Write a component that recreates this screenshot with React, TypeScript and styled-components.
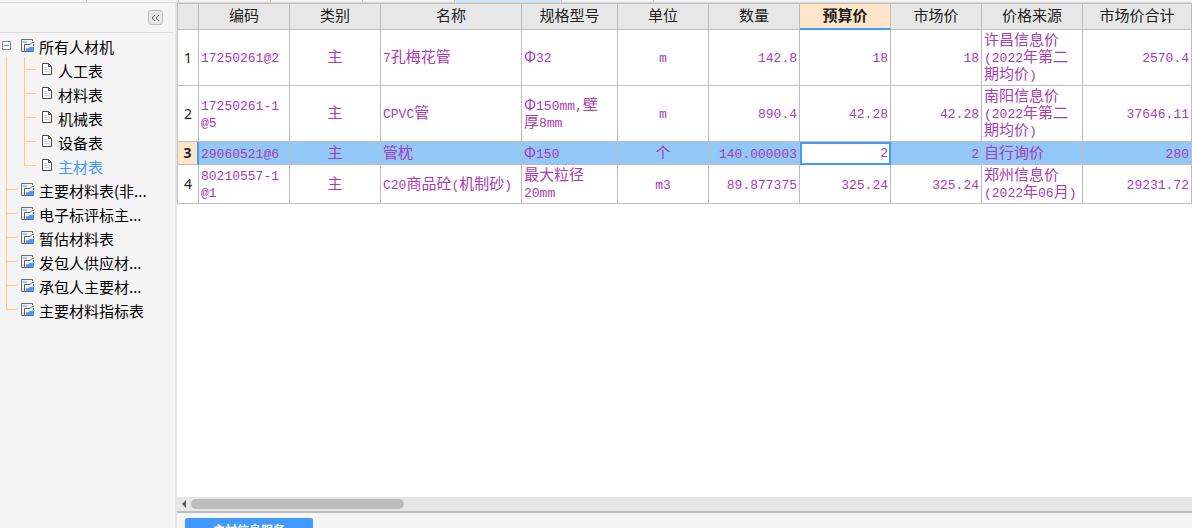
import React from "react";
import styled, { createGlobalStyle, css } from "styled-components";

const GlobalStyle = createGlobalStyle`
  * { box-sizing: border-box; }
  body {
    margin: 0;
    background: #f4f4f4;
    color: #000;
    font: 15px/17px "Noto Sans CJK SC", sans-serif;
  }
  button, input { font: inherit; color: inherit; }
`;

const Page = styled.div`
  display: flex;
  flex-direction: column;
  height: 100vh;
  overflow: hidden;
`;

const TabStrip = styled.nav`
  display: flex;
  flex: none;
  height: 3px;
  border-bottom: 1px solid #d8d8d8;
`;

const Tab = styled.span<{ $width: number; $active?: boolean }>`
  width: ${(p) => p.$width}px;
  border-right: 1px solid #c4c4c4;
  background: ${(p) => (p.$active ? "#cce6fc" : "#f4f4f4")};
`;

const Body = styled.div`
  display: flex;
  flex: 1;
  min-height: 0;
`;

const Sidebar = styled.aside`
  flex: none;
  width: 177px;
  border-right: 2px solid #e6e6e6;
`;

const SidebarHeader = styled.div`
  display: flex;
  justify-content: flex-end;
  align-items: center;
  height: 30px;
  margin-right: 2px;
  padding-right: 10px;
  border-bottom: 1px solid #dcdcdc;
`;

const CollapseButton = styled.button`
  display: flex;
  align-items: center;
  justify-content: center;
  width: 15px;
  height: 15px;
  padding: 0;
  border: 1px solid #bdbdbd;
  border-radius: 3px;
  background: #e6e6e6;
`;

const TreeRow = styled.div`
  display: flex;
  height: 24px;
`;

const railLine = "#ffcb80";

const Rail = styled.span<{ $kind: "branch" | "end" | "through" }>`
  flex: none;
  width: 12px;
  margin: 0 0 0 6px;
  background-repeat: no-repeat;
  background-image: linear-gradient(${railLine}, ${railLine}), linear-gradient(${railLine}, ${railLine});
  background-position: 0 0, 0 12px;
  background-size: ${(p) => {
    if (p.$kind === "through") return "1px 100%, 0 0";
    return p.$kind === "end" ? "1px 13px, 12px 1px" : "1px 100%, 12px 1px";
  }};
`;

const ExpandButton = styled.button`
  display: flex;
  flex: none;
  width: 18px;
  height: 24px;
  padding: 8px 0 0 2px;
  border: 0;
  background: none;
`;

const TreeLink = styled.a<{ $active?: boolean; $leaf?: boolean }>`
  display: flex;
  gap: ${(p) => (p.$leaf ? 5 : 4)}px;
  margin-left: ${(p) => (p.$leaf ? 6 : 3)}px;
  color: ${(p) => (p.$active ? "#4499ff" : "#000")};
  text-decoration: none;
  white-space: nowrap;

  svg { flex: none; margin-top: 6px; }
  span { padding-top: 5px; }
`;

const Main = styled.main`
  display: flex;
  flex: 1;
  flex-direction: column;
  min-width: 0;
`;

const GridArea = styled.div`
  flex: 1;
  min-height: 0;
  overflow: hidden;
  background: #fff;
`;

const Table = styled.table`
  width: 100%;
  table-layout: fixed;
  border-collapse: separate;
  border-spacing: 0;
  border-top: 1px solid #bdbdbd;
  border-left: 1px solid #bdbdbd;
`;

const HeadCell = styled.th<{ $active?: boolean }>`
  height: 26px;
  padding: 0 0 4px;
  border-right: 1px solid #bdbdbd;
  border-bottom: 1px solid #bdbdbd;
  background: #e7e7e7;
  color: #222;
  font-weight: 400;
  ${(p) =>
    p.$active &&
    css`
      border-bottom: 2px solid #4499ff;
      background: #ffe6c8;
      font-weight: 700;
    `}
`;

const RowNumber = styled.th<{ $active?: boolean }>`
  padding: 0 0 1px;
  border-right: ${(p) => (p.$active ? "2px solid #4499ff" : "1px solid #bdbdbd")};
  border-bottom: 1px solid #bdbdbd;
  background: ${(p) => (p.$active ? "#ffe6c8" : "#fff")};
  color: #222;
  font-family: "Noto Sans", sans-serif;
  font-size: 14px;
  font-weight: ${(p) => (p.$active ? 700 : 400)};
`;

type Align = "left" | "center" | "right";

const Cell = styled.td<{ $align: Align; $active?: boolean; $editing?: boolean }>`
  height: 23px;
  padding: 0 2px 4px;
  border-right: 1px solid #bdbdbd;
  border-bottom: 1px solid #bdbdbd;
  background: ${(p) => (p.$active ? "#91c8f8" : "#fff")};
  color: #a83cb4;
  text-align: ${(p) => p.$align};
  white-space: pre-line;
  ${(p) =>
    p.$editing &&
    css`
      padding: 0;
      border: 0;
    `}
`;

const Latin = styled.span`
  font-family: "Liberation Mono", monospace;
  font-size: 13px;
  line-height: 0;
`;

const PriceInput = styled.input`
  display: block;
  width: 100%;
  height: 23px;
  padding: 0 1px;
  border: 2px solid #4499ff;
  outline: 0;
  background: #fff;
  font-family: "Liberation Mono", monospace;
  font-size: 13px;
  text-align: right;
`;

const ScrollBar = styled.div`
  display: flex;
  flex: none;
  align-items: center;
  height: 14px;
  background: #e7e7e7;
`;

const ScrollButton = styled.button`
  display: flex;
  align-items: center;
  justify-content: center;
  width: 14px;
  height: 14px;
  padding: 0;
  border: 0;
  background: none;
`;

const ScrollThumb = styled.div`
  width: 21%;
  height: 10px;
  border-radius: 5px;
  background: #bdbdbd;
`;

const Footer = styled.footer`
  flex: none;
  height: 17px;
  padding: 5px 8px 0;
  border-top: 2px solid #bdbdbd;
  overflow: hidden;
`;

const ServiceTab = styled.button`
  display: block;
  width: 128px;
  height: 24px;
  padding: 0;
  border: 0;
  border-radius: 2px 2px 0 0;
  background: #4499ff;
  color: #fff;
  font-size: 12px;
  font-weight: 700;
  line-height: 24px;
`;

const FormIcon = () => (
  <svg width="14" height="13" viewBox="0 0 14 13" fill="none" aria-hidden="true">
    <path d="M11.500 2V.5H.5v12h12" stroke="#6a6a6a" />
    <path d="M2 2h4v2H2z" fill="#91c8f8" />
    <path d="M13 3.500h-2l-2 2H3.500V12M12.500 5v2" stroke="#5c5c5c" />
    <path d="M5 12V9.500L7.500 9 9 8h4v4z" fill="#4499ff" />
  </svg>
);

const PageIcon = () => (
  <svg width="11" height="13" viewBox="0 0 11 13" fill="none" aria-hidden="true">
    <path d="M.5.5h6l3 3v8h-9z" fill="#fafafa" stroke="#4c4c4c" />
    <path d="M6.500.5v3h3" stroke="#4c4c4c" />
    <path d="M2 4.500h3M2 6.500h6M2 8.500h6" stroke="#d6d6d6" />
  </svg>
);

const tabs = [87, 92, 92, 92, 92, 107, 92];

const leaves = ["人工表", "材料表", "机械表", "设备表", "主材表"];

const forms = [
  "主要材料表(非...",
  "电子标评标主...",
  "暂估材料表",
  "发包人供应材...",
  "承包人主要材...",
  "主要材料指标表",
];

const columns: { title: string; width?: number; align: Align }[] = [
  { title: "编码", width: 91, align: "left" },
  { title: "类别", width: 91, align: "center" },
  { title: "名称", width: 141, align: "left" },
  { title: "规格型号", width: 96, align: "left" },
  { title: "单位", width: 91, align: "center" },
  { title: "数量", width: 91, align: "right" },
  { title: "预算价", width: 91, align: "right" },
  { title: "市场价", width: 91, align: "right" },
  { title: "价格来源", width: 101, align: "left" },
  { title: "市场价合计", align: "right" },
];

const BUDGET = 6;
const SELECTED = 2;

const rows = [
  ["17250261@2", "主", "7孔梅花管", "Φ32", "m", "142.8", "18", "18", "许昌信息价\n(2022年第二\n期均价)", "2570.4"],
  ["17250261-1\n@5", "主", "CPVC管", "Φ150mm,壁\n厚8mm", "m", "890.4", "42.28", "42.28", "南阳信息价\n(2022年第二\n期均价)", "37646.11"],
  ["29060521@6", "主", "管枕", "Φ150", "个", "140.000003", "2", "2", "自行询价", "280"],
  ["80210557-1\n@1", "主", "C20商品砼(机制砂)", "最大粒径\n20mm", "m3", "89.877375", "325.24", "325.24", "郑州信息价\n(2022年06月)", "29231.72"],
];

/* Sets half-width runs in the monospaced face. */
const MixedText = ({ text }: { text: string }) => (
  <>
    {text.split(/([!-~]+)/).map((part, i) => (i % 2 ? <Latin key={i}>{part}</Latin> : part))}
  </>
);

export default function App() {
  return (
    <Page>
      <GlobalStyle />
      <TabStrip>
        {tabs.map((width, i) => (
          <Tab key={i} $width={width} $active={i === 5} />
        ))}
      </TabStrip>
      <Body>
        <Sidebar>
          <SidebarHeader>
            <CollapseButton aria-label="收起">
              <svg width="9" height="8" viewBox="0 0 9 8" fill="none" stroke="#555">
                <path d="M4 1 1 4l3 3M8 1 5 4l3 3" />
              </svg>
            </CollapseButton>
          </SidebarHeader>
          <TreeRow>
            <ExpandButton aria-label="展开" aria-expanded="true">
              <svg width="9" height="9" viewBox="0 0 9 9" fill="#fff">
                <path d="M.5.5h8v8h-8z" stroke="#8a8a8a" />
                <path d="M2 4.500h5" stroke="#2a9fd0" />
              </svg>
            </ExpandButton>
            <TreeLink href="#all">
              <FormIcon />
              <span>所有人材机</span>
            </TreeLink>
          </TreeRow>
          {leaves.map((name, i) => (
            <TreeRow key={name}>
              <Rail $kind="through" />
              <Rail $kind={i === leaves.length - 1 ? "end" : "branch"} />
              <TreeLink href={`#leaf-${i}`} $leaf $active={i === leaves.length - 1}>
                <PageIcon />
                <span>{name}</span>
              </TreeLink>
            </TreeRow>
          ))}
          {forms.map((name, i) => (
            <TreeRow key={name}>
              <Rail $kind={i === forms.length - 1 ? "end" : "branch"} />
              <TreeLink href={`#form-${i}`}>
                <FormIcon />
                <span>{name}</span>
              </TreeLink>
            </TreeRow>
          ))}
        </Sidebar>
        <Main>
          <GridArea>
            <Table>
              <colgroup>
                <col style={{ width: 21 }} />
                {columns.map((c) => (
                  <col key={c.title} style={{ width: c.width }} />
                ))}
              </colgroup>
              <thead>
                <tr>
                  <HeadCell />
                  {columns.map((c, i) => (
                    <HeadCell key={c.title} scope="col" $active={i === BUDGET}>
                      {c.title}
                    </HeadCell>
                  ))}
                </tr>
              </thead>
              <tbody>
                {rows.map((row, r) => (
                  <tr key={row[0]}>
                    <RowNumber scope="row" $active={r === SELECTED}>
                      {r + 1}
                    </RowNumber>
                    {row.map((text, c) => {
                      const editing = r === SELECTED && c === BUDGET;
                      return (
                        <Cell key={c} $align={columns[c].align} $active={r === SELECTED} $editing={editing}>
                          {editing ? (
                            <PriceInput aria-label="预算价" defaultValue={text} />
                          ) : (
                            <MixedText text={text} />
                          )}
                        </Cell>
                      );
                    })}
                  </tr>
                ))}
              </tbody>
            </Table>
          </GridArea>
          <ScrollBar>
            <ScrollButton aria-label="向左滚动">
              <svg width="4" height="8" viewBox="0 0 4 8" fill="#5c5c5c">
                <path d="M4 0v8L0 4z" />
              </svg>
            </ScrollButton>
            <ScrollThumb />
          </ScrollBar>
          <Footer>
            <ServiceTab>主材信息服务</ServiceTab>
          </Footer>
        </Main>
      </Body>
    </Page>
  );
}
